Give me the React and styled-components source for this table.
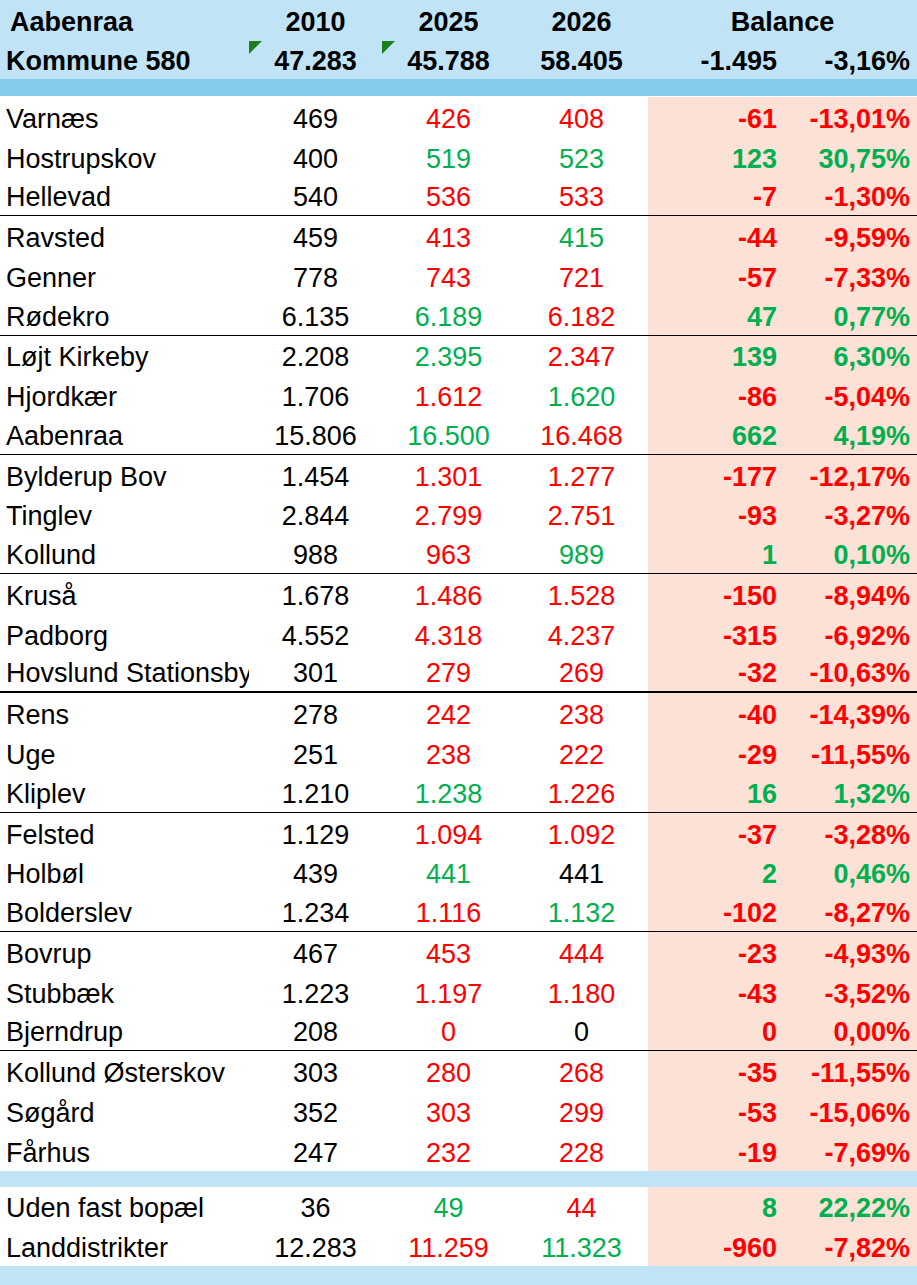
import React from 'react';
import styled, { createGlobalStyle, css } from 'styled-components';

const GlobalStyle = createGlobalStyle`
	html, body {
		margin: 0;
		padding: 0;
		background: #ffffff;
	}
	body {
		font-family: "Liberation Sans", Arial, sans-serif;
		color: #000000;
	}
`;

const COLS = '249px 133px 133px 133px 135px 134px';

const RED = '#ff0000';
const GREEN = '#00b050';

const Sheet = styled.div`
	width: 917px;
	display: flex;
	flex-direction: column;
	font-size: 27px;
	overflow: hidden;
`;

const HeaderBlock = styled.div`
	background-color: #c0e4f5;
	display: flex;
	flex-direction: column;
	padding-top: 1px;
`;

const Row = styled.div`
	display: grid;
	grid-template-columns: ${COLS};
	height: ${p => p.$h}px;
	box-sizing: border-box;
	${p =>
		p.$rule &&
		css`
			border-bottom: ${p.$rule}px solid #000000;
		`}
`;

const Band = styled.div`
	height: ${p => p.$h}px;
	background-color: ${p => (p.$dark ? '#83caeb' : '#c0e4f5')};
`;

const Gap = styled.div`
	height: 1px;
`;

const Cell = styled.div`
	position: relative;
	display: flex;
	align-items: flex-end;
	padding-bottom: 2px;
	box-sizing: border-box;
	white-space: nowrap;
	overflow: hidden;
	min-width: 0;
`;

const NameCell = styled(Cell)`
	padding-left: ${p => (p.$indent ? 10 : 6)}px;
	font-weight: ${p => (p.$bold ? 700 : 400)};
	text-overflow: clip;
`;

const NumCell = styled(Cell)`
	justify-content: center;
	color: ${p => p.$color || '#000000'};
	font-weight: ${p => (p.$bold ? 700 : 400)};

	${p =>
		p.$flag &&
		css`
			&::before {
				content: '';
				position: absolute;
				top: 1px;
				left: 0;
				width: 0;
				height: 0;
				border-top: 13px solid #1b7f1b;
				border-right: 13px solid transparent;
			}
		`}
`;

const BalanceCell = styled(Cell)`
	justify-content: flex-end;
	padding-right: ${p => p.$pr}px;
	font-weight: 700;
	color: ${p => p.$color || '#000000'};
	background-color: ${p => (p.$shade ? '#fbe1d6' : 'transparent')};
`;

const BalanceTitle = styled(Cell)`
	grid-column: span 2;
	justify-content: center;
	font-weight: 700;
`;

const c = k => (k === 'r' ? RED : k === 'g' ? GREEN : '#000000');

const towns = [
	['Varnæs', '469', '426', 'r', '408', 'r', '-61', '-13,01%'],
	['Hostrupskov', '400', '519', 'g', '523', 'g', '123', '30,75%'],
	['Hellevad', '540', '536', 'r', '533', 'r', '-7', '-1,30%'],
	['Ravsted', '459', '413', 'r', '415', 'g', '-44', '-9,59%'],
	['Genner', '778', '743', 'r', '721', 'r', '-57', '-7,33%'],
	['Rødekro', '6.135', '6.189', 'g', '6.182', 'r', '47', '0,77%'],
	['Løjt Kirkeby', '2.208', '2.395', 'g', '2.347', 'r', '139', '6,30%'],
	['Hjordkær', '1.706', '1.612', 'r', '1.620', 'g', '-86', '-5,04%'],
	['Aabenraa', '15.806', '16.500', 'g', '16.468', 'r', '662', '4,19%'],
	['Bylderup Bov', '1.454', '1.301', 'r', '1.277', 'r', '-177', '-12,17%'],
	['Tinglev', '2.844', '2.799', 'r', '2.751', 'r', '-93', '-3,27%'],
	['Kollund', '988', '963', 'r', '989', 'g', '1', '0,10%'],
	['Kruså', '1.678', '1.486', 'r', '1.528', 'r', '-150', '-8,94%'],
	['Padborg', '4.552', '4.318', 'r', '4.237', 'r', '-315', '-6,92%'],
	['Hovslund Stationsby', '301', '279', 'r', '269', 'r', '-32', '-10,63%'],
	['Rens', '278', '242', 'r', '238', 'r', '-40', '-14,39%'],
	['Uge', '251', '238', 'r', '222', 'r', '-29', '-11,55%'],
	['Kliplev', '1.210', '1.238', 'g', '1.226', 'r', '16', '1,32%'],
	['Felsted', '1.129', '1.094', 'r', '1.092', 'r', '-37', '-3,28%'],
	['Holbøl', '439', '441', 'g', '441', 'k', '2', '0,46%'],
	['Bolderslev', '1.234', '1.116', 'r', '1.132', 'g', '-102', '-8,27%'],
	['Bovrup', '467', '453', 'r', '444', 'r', '-23', '-4,93%'],
	['Stubbæk', '1.223', '1.197', 'r', '1.180', 'r', '-43', '-3,52%'],
	['Bjerndrup', '208', '0', 'r', '0', 'k', '0', '0,00%'],
	['Kollund Østerskov', '303', '280', 'r', '268', 'r', '-35', '-11,55%'],
	['Søgård', '352', '303', 'r', '299', 'r', '-53', '-15,06%'],
	['Fårhus', '247', '232', 'r', '228', 'r', '-19', '-7,69%'],
];

const extras = [
	['Uden fast bopæl', '36', '49', 'g', '44', 'r', '8', '22,22%'],
	['Landdistrikter', '12.283', '11.259', 'r', '11.323', 'g', '-960', '-7,82%'],
];

const balanceColor = v => (parseFloat(v.replace('.', '').replace(',', '.')) > 0 ? GREEN : RED);

const DataRow = ({ row, h, rule }) => {
	const [name, y2010, y2025, c2025, y2026, c2026, diff, pct] = row;
	const tone = balanceColor(diff);
	return (
		<Row $h={h} $rule={rule}>
			<NameCell>{name}</NameCell>
			<NumCell>{y2010}</NumCell>
			<NumCell $color={c(c2025)}>{y2025}</NumCell>
			<NumCell $color={c(c2026)}>{y2026}</NumCell>
			<BalanceCell $shade $pr={6} $color={tone}>{diff}</BalanceCell>
			<BalanceCell $shade $pr={7} $color={tone}>{pct}</BalanceCell>
		</Row>
	);
};

const App = () => {
	return (
		<>
			<GlobalStyle />
			<Sheet>
				<HeaderBlock>
					<Row $h={39}>
						<NameCell $bold $indent>Aabenraa</NameCell>
						<NumCell $bold>2010</NumCell>
						<NumCell $bold>2025</NumCell>
						<NumCell $bold>2026</NumCell>
						<BalanceTitle>Balance</BalanceTitle>
					</Row>
					<Row $h={39}>
						<NameCell $bold>Kommune 580</NameCell>
						<NumCell $bold $flag>47.283</NumCell>
						<NumCell $bold $flag>45.788</NumCell>
						<NumCell $bold>58.405</NumCell>
						<BalanceCell $pr={6}>-1.495</BalanceCell>
						<BalanceCell $pr={7}>-3,16%</BalanceCell>
					</Row>
				</HeaderBlock>
				<Band $dark $h={17} />
				<Gap />
				{towns.map((row, i) => {
					const last = i === towns.length - 1;
					const rule = !last && i % 3 === 2 ? (i === 14 ? 2 : 1) : 0;
					return <DataRow key={row[0]} row={row} h={39.78} rule={rule} />;
				})}
				<Band $h={16} />
				{extras.map(row => (
					<DataRow key={row[0]} row={row} h={39.5} />
				))}
				<Band $h={24} />
			</Sheet>
		</>
	);
};

export default App;
